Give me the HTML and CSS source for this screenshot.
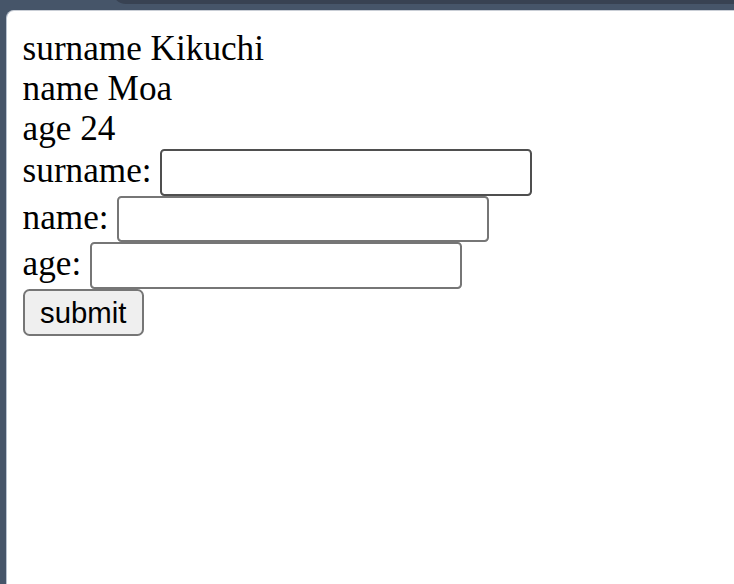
FILE: index.html
```html
<!DOCTYPE html>
<html>
<head>
<meta charset="utf-8">
<link rel="stylesheet" href="styles.css">
</head>
<body>
<div class="topbar"></div>
<div class="panel">
  <div class="page">
    <div>surname Kikuchi</div>
    <div>name Moa</div>
    <div>age 24</div>
    <form>
      surname: <input type="text" class="field field-hover"><br>
      name: <input type="text" class="field"><br>
      age: <input type="text" class="field"><br>
      <button type="button" class="btn">submit</button>
    </form>
  </div>
</div>
</body>
</html>
```
FILE: styles.css
```css
html, body {
  height: 100%;
  overflow: hidden;
}
body {
  margin: 0;
  background: #465569;
}
.topbar {
  height: 14px;
  margin-top: -10px;
  margin-left: 112px;
  background: #384252;
  border-bottom-left-radius: 14px;
}
.panel {
  margin-top: 6px;
  margin-left: 6px;
  min-height: 600px;
  background: #fff;
  border-top: 1px solid #c9ced6;
  border-left: 1px solid #b9c3d0;
  border-top-left-radius: 8px;
}
.page {
  zoom: 2.2;
  padding: 8px 7.5px 7.5px 7.1px;
  font-family: "Liberation Serif", "Times New Roman", serif;
  font-size: 16px;
  color: #000;
}
form {
  margin: 0;
}
.field {
  box-sizing: border-box;
  width: 169px;
  height: 21.33px;
  margin: 0;
  padding: 1px 2px;
  border: 1px solid #767676;
  border-radius: 2px;
  font: 13.333px "Liberation Sans", Arial, sans-serif;
  background: #fff;
}
.field-hover {
  border-color: #4f4f4f;
}
.btn {
  margin: 0;
  padding: 2px 7px;
  border: 1px solid #767676;
  border-radius: 3px;
  background: #efefef;
  color: #000;
  font: 13.333px "Liberation Sans", Arial, sans-serif;
}
```
